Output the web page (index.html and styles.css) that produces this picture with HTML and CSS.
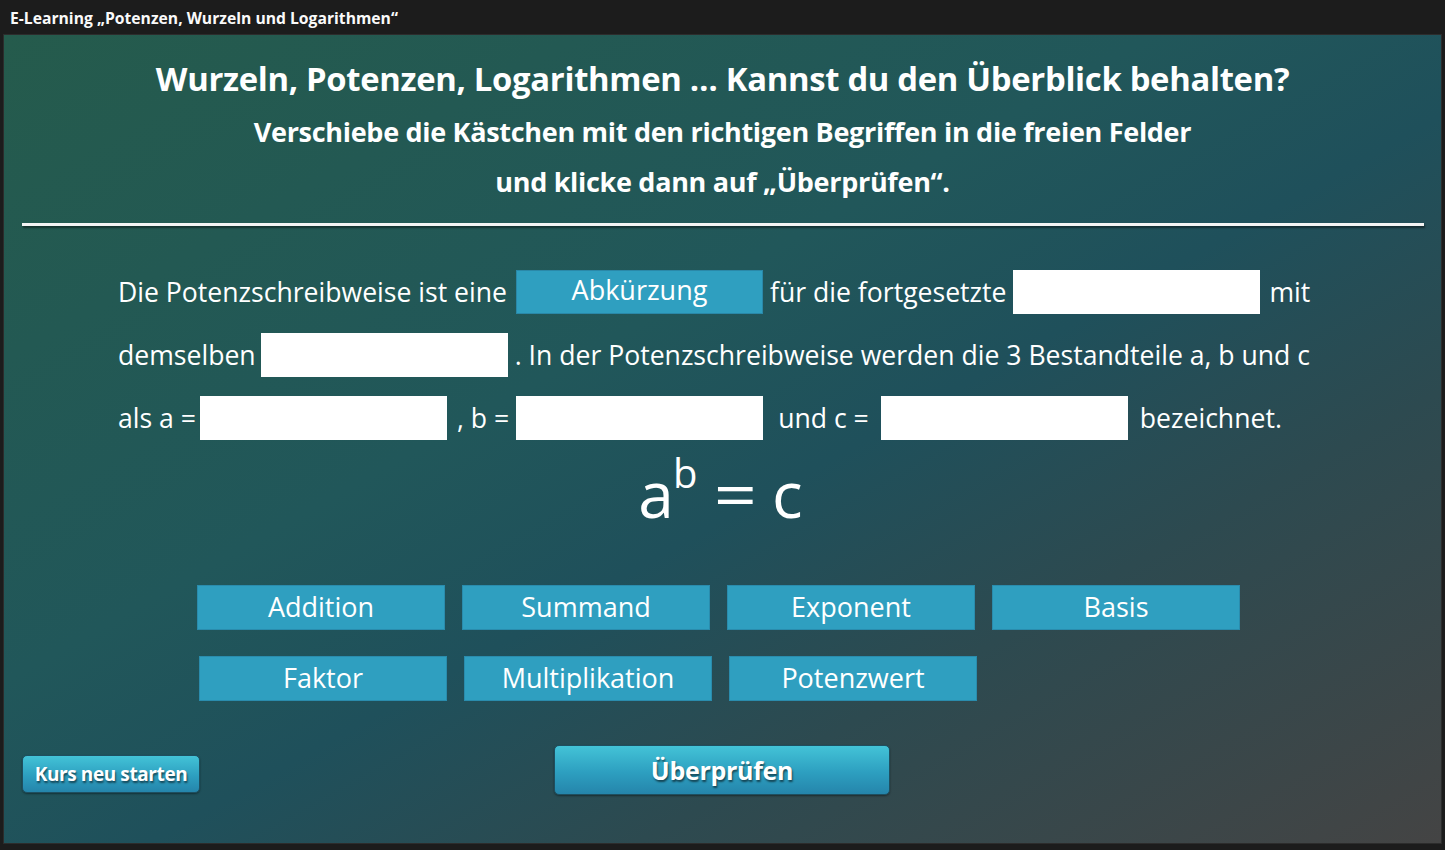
FILE: index.html
```html
<!DOCTYPE html>
<html lang="de">
<head>
  <title>E-Learning Potenzen, Wurzeln und Logarithmen</title>
  <link rel="stylesheet" href="styles.css">
</head>

<body>
  <header class="topbar">E-Learning „Potenzen, Wurzeln und Logarithmen“</header>

  <main class="stage">
    <section class="intro">
      <h1>Wurzeln, Potenzen, Logarithmen … Kannst du den Überblick behalten?</h1>
      <p>Verschiebe die Kästchen mit den richtigen Begriffen in die freien Felder</p>
      <p>und klicke dann auf „Überprüfen“.</p>
    </section>

    <hr class="rule">

    <section class="cloze">
      <div class="line">
        <span>Die Potenzschreibweise ist eine</span>
        <span class="slot filled l1a">Abkürzung</span>
        <span class="l1b">für die fortgesetzte</span>
        <span class="slot l1c"></span>
        <span class="l1d">mit</span>
      </div>
      <div class="line">
        <span>demselben</span>
        <span class="slot l2a"></span>
        <span class="l2b">. In der Potenzschreibweise werden die 3 Bestandteile a, b und c</span>
      </div>
      <div class="line">
        <span>als a =</span>
        <span class="slot l3a"></span>
        <span class="l3b">, b =</span>
        <span class="slot l3c"></span>
        <span class="l3d">und c =</span>
        <span class="slot l3e"></span>
        <span class="l3f">bezeichnet.</span>
      </div>
      <div class="formula">
        <span>a</span><sup>b</sup><span class="eq">=</span><span>c</span>
      </div>
    </section>

    <section class="pool">
      <div class="row">
        <span class="chip">Addition</span>
        <span class="chip">Summand</span>
        <span class="chip">Exponent</span>
        <span class="chip">Basis</span>
      </div>
      <div class="row second">
        <span class="chip">Faktor</span>
        <span class="chip">Multiplikation</span>
        <span class="chip">Potenzwert</span>
      </div>
    </section>

    <footer class="actions">
      <button class="btn small">Kurs neu starten</button>
      <button class="btn check">Überprüfen</button>
    </footer>
  </main>
</body>
</html>
```

FILE: styles.css
```css
*,
*::before,
*::after {
  box-sizing: border-box;
}

html {
  height: 100%;
}
body {
  margin: 0;
  height: 100%;
  background: #1c1c1c;
  font-family: "Open Sans", sans-serif;
  color: #fff;
  display: flex;
  flex-direction: column;
}

.topbar {
  height: 34px;
  padding: 8px 0 0 10px;
  font-size: 15.7px;
  font-weight: 700;
  line-height: 20px;
  color: #fafafa;
}

.stage {
  height: 810px;
  margin: 0 3px;
  border: 1px solid #2c2c2c;
  background: linear-gradient(to bottom right, #255b4c 0%, #21575a 40%, #1f505b 55%, #2d4a50 72%, #444 100%);
  position: relative;
}

.intro {
  text-align: center;
  font-weight: 700;
}
.intro h1 {
  margin: 24px 0 0;
  font-size: 32.8px;
  line-height: 40px;
  letter-spacing: -0.3px;
}
.intro p {
  margin: 0;
  font-size: 27px;
  line-height: 50px;
  letter-spacing: -0.3px;
}
.intro h1 + p {
  margin-top: 8px;
}

.rule {
  margin: 16px 17px 0 18px;
  height: 3px;
  border: 0;
  background: #f4f4f4;
  box-shadow: 1px 2px 2px rgba(0, 0, 0, 0.45);
}

.cloze {
  margin-top: 44px;
  padding-left: 114px;
  font-size: 26.6px;
}
.line {
  display: flex;
  align-items: center;
  height: 44px;
  margin-bottom: 19px;
  white-space: nowrap;
}
.slot {
  display: inline-block;
  width: 247px;
  height: 44px;
  background: #fff;
}
.slot.filled {
  background: #2f9fc0;
  border: 1px solid #2a88a8;
  text-align: center;
  font-size: 27px;
  line-height: 38px;
}
.l1a { margin-left: 9px; }
.l1b { margin-left: 7px; }
.l1c { margin-left: 7px; }
.l1d { margin-left: 9px; }
.l2a { margin-left: 5px; }
.l2b { margin-left: 7px; }
.l3a { margin-left: 4px; }
.l3b { margin-left: 10px; }
.l3c { margin-left: 7px; }
.l3d { margin-left: 15px; }
.l3e { margin-left: 12px; }
.l3f { margin-left: 12px; }

.formula {
  width: 1205px;
  text-align: center;
  font-size: 64px;
  line-height: 70px;
}
.formula sup {
  font-size: 40px;
  vertical-align: 30px;
  line-height: 0;
  margin-left: -1px;
}
.formula .eq {
  display: inline-block;
  margin: 0 18px 0 20px;
  transform: scaleX(1.18);
}

.pool {
  margin-top: 56px;
}
.pool .row {
  display: flex;
  gap: 17px;
  padding-left: 193px;
  margin-bottom: 26px;
}
.pool .row.second {
  padding-left: 195px;
}
.chip {
  width: 248px;
  height: 45px;
  background: #2f9fc0;
  border: 1px solid #2a8cad;
  text-align: center;
  font-size: 27px;
  line-height: 42px;
}

.actions {
  position: relative;
  height: 60px;
}
.btn {
  position: absolute;
  border: 1px solid #1e4f60;
  border-radius: 5px;
  background: linear-gradient(#43c3d7, #2d9fc0 55%, #2585ab);
  color: #fff;
  font-family: "Open Sans", sans-serif;
  font-weight: 700;
  text-shadow: 1px 2px 2px rgba(0, 0, 0, 0.55);
  box-shadow: 0 1px 2px rgba(0, 0, 0, 0.4);
}
.btn.small {
  left: 18px;
  top: 28px;
  width: 178px;
  height: 38px;
  font-size: 19px;
  letter-spacing: -0.4px;
}
.btn.check {
  left: 550px;
  top: 18px;
  width: 336px;
  height: 50px;
  font-size: 25px;
  letter-spacing: -0.3px;
}
```
